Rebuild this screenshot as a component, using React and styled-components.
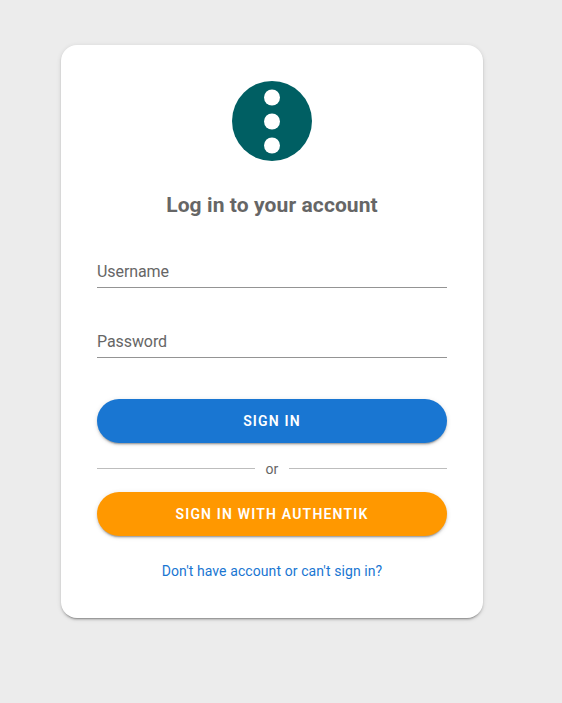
import React from 'react'
import styled, { createGlobalStyle } from 'styled-components'

const GlobalStyle = createGlobalStyle`
    * {
        box-sizing: border-box;
    }
    body {
        margin: 0;
        background-color: #ececec;
        font-family: Roboto, sans-serif;
    }
`

const Logo = () => (
    <LogoSvg viewBox="0 0 80 80">
        <circle cx="40" cy="40" r="40" fill="#005f63" />
        <circle cx="40" cy="16.5" r="8" fill="#fff" />
        <circle cx="40" cy="40.5" r="8" fill="#fff" />
        <circle cx="40" cy="64.5" r="8" fill="#fff" />
    </LogoSvg>
)

const App = () => {
    return (
        <Page>
            <GlobalStyle />
            <Card>
                <Logo />
                <Title>Log in to your account</Title>
                <Field type="text" placeholder="Username" />
                <Field type="password" placeholder="Password" />
                <Actions>
                    <Button type="button" $color="#1976d2">Sign in</Button>
                    <Divider>or</Divider>
                    <Button type="button" $color="#ff9800">Sign in with authentik</Button>
                </Actions>
                <HelpLink href="#">Don't have account or can't sign in?</HelpLink>
            </Card>
        </Page>
    )
}

export default App

const Page = styled.div`
    min-height: 100vh;
    padding: 45px 79px 0 61px;
`
const Card = styled.div`
    display: flex;
    flex-direction: column;
    width: 422px;
    height: 573px;
    padding: 36px;
    border-radius: 16px;
    background-color: white;
    box-shadow: 0 3px 1px -2px rgba(0, 0, 0, 0.2), 0 2px 2px 0 rgba(0, 0, 0, 0.14), 0 1px 5px 0 rgba(0, 0, 0, 0.12);
`
const LogoSvg = styled.svg`
    flex: none;
    align-self: center;
    width: 80px;
    height: 80px;
`
const Title = styled.h1`
    margin: 28px 0 26px;
    font-size: 21px;
    font-weight: 700;
    line-height: 32px;
    letter-spacing: 0.1px;
    text-align: center;
    color: #666;
`
const Field = styled.input`
    flex: none;
    width: 100%;
    height: 41px;
    margin: 0 0 29px;
    padding: 8px 0 0;
    border: none;
    border-bottom: 1px solid #949494;
    border-radius: 0;
    background: none;
    font-family: inherit;
    font-size: 16px;
    letter-spacing: -0.08px;
    color: #212121;
    outline: none;
    &::placeholder {
        color: #666;
        opacity: 1;
    }
`
const Actions = styled.div`
    display: flex;
    flex-direction: column;
    padding-top: 12px;
`
const Button = styled.button`
    flex: none;
    height: 44px;
    padding: 0;
    border: none;
    border-radius: 28px;
    background-color: ${props => props.$color};
    color: white;
    font-family: inherit;
    font-size: 14px;
    font-weight: 600;
    letter-spacing: 1.18px;
    text-transform: uppercase;
    cursor: pointer;
    box-shadow: 0 3px 1px -2px rgba(0, 0, 0, 0.2), 0 2px 2px 0 rgba(0, 0, 0, 0.14), 0 1px 5px 0 rgba(0, 0, 0, 0.12);
`
const Divider = styled.div`
    display: flex;
    align-items: center;
    gap: 10px;
    height: 49px;
    padding-top: 2px;
    font-size: 14px;
    letter-spacing: 0.2px;
    color: #666;
    &::before, &::after {
        content: '';
        flex: 1;
        height: 1px;
        background-color: #bdbdbd;
    }
`
const HelpLink = styled.a`
    align-self: center;
    margin-top: 25px;
    font-size: 14px;
    line-height: 20px;
    letter-spacing: 0.09px;
    color: #1976d2;
    text-decoration: none;
`
